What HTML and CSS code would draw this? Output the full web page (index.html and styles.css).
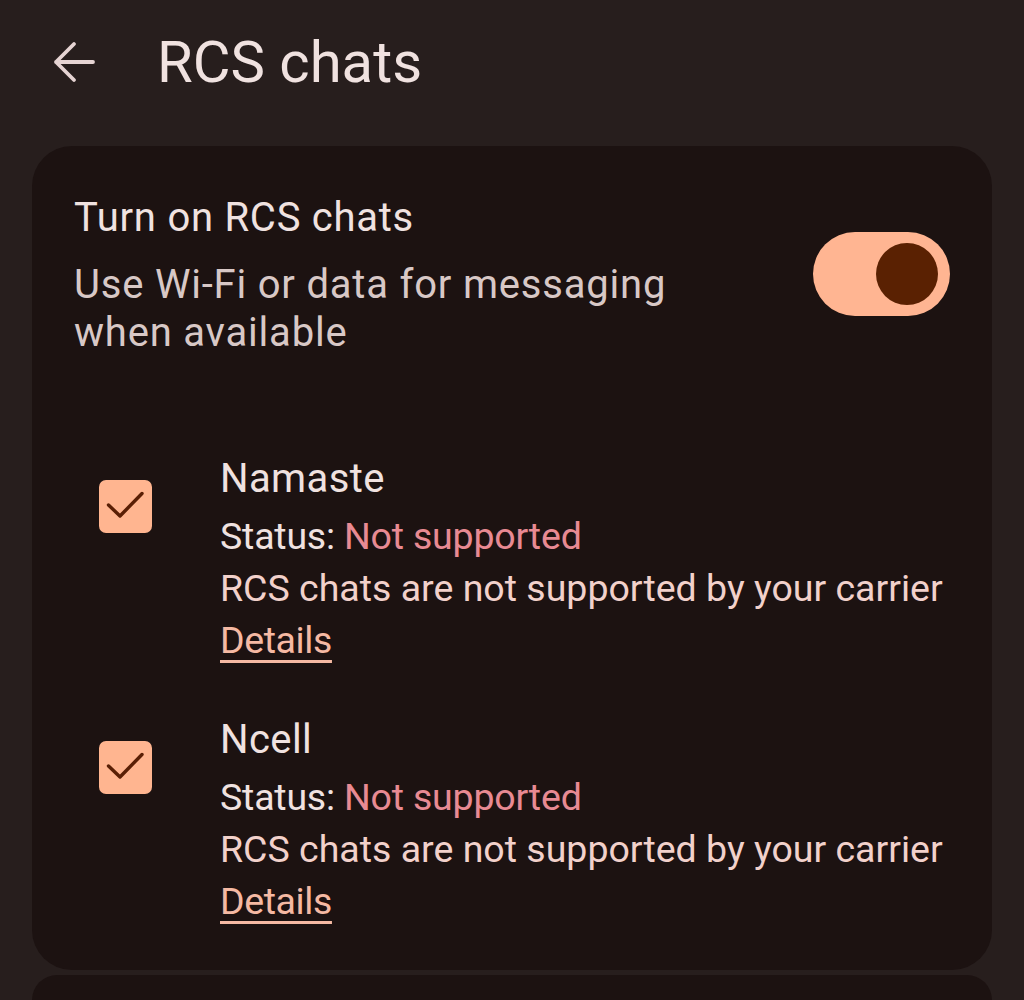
FILE: index.html
```html
<!DOCTYPE html>
<html>
<head>
<meta charset="utf-8">
<link rel="stylesheet" href="styles.css">
</head>
<body>
<div class="app">
  <header class="topbar">
    <svg class="back" viewBox="0 0 42 42" width="42" height="42">
      <path d="M3 21H40M21 3L3 21L21 39" fill="none" stroke="#e6d4d3" stroke-width="3.8" stroke-linecap="round" stroke-linejoin="round"/>
    </svg>
    <h1 class="title">RCS chats</h1>
  </header>
  <section class="card">
    <div class="master">
      <div class="master-text">
        <div class="master-title">Turn on RCS chats</div>
        <div class="master-sub">Use Wi-Fi or data for messaging<br>when available</div>
      </div>
      <div class="switch"><div class="knob"></div></div>
    </div>
    <div class="sims">
      <div class="sim">
        <div class="checkbox">
          <svg viewBox="0 0 53 53" width="53" height="53"><path d="M9.5 25L21 36L43 13.5" fill="none" stroke="#5a1f05" stroke-width="3.4" stroke-linecap="round" stroke-linejoin="round"/></svg>
        </div>
        <div class="sim-text">
          <div class="sim-name">Namaste</div>
          <div class="status">Status: <span class="bad">Not supported</span></div>
          <div class="reason">RCS chats are not supported by your carrier</div>
          <a class="details">Details</a>
        </div>
      </div>
      <div class="sim">
        <div class="checkbox">
          <svg viewBox="0 0 53 53" width="53" height="53"><path d="M9.5 25L21 36L43 13.5" fill="none" stroke="#5a1f05" stroke-width="3.4" stroke-linecap="round" stroke-linejoin="round"/></svg>
        </div>
        <div class="sim-text">
          <div class="sim-name">Ncell</div>
          <div class="status">Status: <span class="bad">Not supported</span></div>
          <div class="reason">RCS chats are not supported by your carrier</div>
          <a class="details">Details</a>
        </div>
      </div>
    </div>
  </section>
  <section class="card next"></section>
</div>
</body>
</html>
```
FILE: styles.css
```css
html, body {
  margin: 0;
  padding: 0;
  background: #271e1d;
}
body {
  font-family: Roboto, "Noto Sans", sans-serif;
  color: #f0e2e0;
  height: 1000px;
  overflow: hidden;
}
.app {
  display: flex;
  flex-direction: column;
}
.topbar {
  height: 146px;
  display: flex;
  align-items: center;
  padding-left: 53px;
  box-sizing: border-box;
  padding-bottom: 22px;
}
.back {
  display: block;
}
.title {
  margin: 0 0 0 62px;
  font-weight: 400;
  font-size: 58px;
  color: #f0e2e0;
  letter-spacing: 0;
}
.card {
  margin: 0 32px;
  background: #1c1211;
  border-radius: 40px;
  padding: 48px 42px 0 42px;
  height: 824px;
  box-sizing: border-box;
}
.card.next {
  margin-top: 5px;
  height: 25px;
  padding: 0;
  border-radius: 40px 40px 0 0;
}
.master {
  display: flex;
  align-items: flex-start;
  justify-content: space-between;
}
.master-title {
  font-size: 40px;
  line-height: 48px;
  color: #f0e2e0;
  letter-spacing: 0.75px;
}
.master-sub {
  font-size: 40px;
  line-height: 48px;
  color: #d8c8c6;
  margin-top: 19px;
  letter-spacing: 0.8px;
}
.switch {
  width: 137px;
  height: 84px;
  border-radius: 42px;
  background: #ffb592;
  margin-top: 38px;
  margin-right: 0;
  display: flex;
  align-items: center;
  justify-content: flex-end;
  padding-right: 12px;
  box-sizing: border-box;
}
.knob {
  width: 62px;
  height: 62px;
  border-radius: 50%;
  background: #5a2102;
}
.sims {
  margin-top: 96px;
  display: flex;
  flex-direction: column;
  gap: 48px;
}
.sim {
  display: flex;
  align-items: flex-start;
}
.checkbox {
  width: 53px;
  height: 53px;
  border-radius: 7px;
  background: #ffb590;
  margin-left: 25px;
  margin-top: 27px;
  display: flex;
  align-items: center;
  justify-content: center;
}
.checkbox svg { display: block; }
.sim-text {
  margin-left: 68px;
  font-size: 37.5px;
  line-height: 52px;
}
.sim-name {
  color: #f0e2e0;
  margin-bottom: 5px;
  font-size: 40px;
  letter-spacing: 0.4px;
}
.status {
  color: #f0e2e0;
  letter-spacing: -0.2px;
}
.bad {
  color: #e88a93;
}
.reason {
  color: #f2d1cb;
}
.details {
  color: #f5b9a3;
  text-decoration: underline;
  text-decoration-thickness: 3px;
  text-underline-offset: 7px;
  letter-spacing: -0.4px;
}
```
